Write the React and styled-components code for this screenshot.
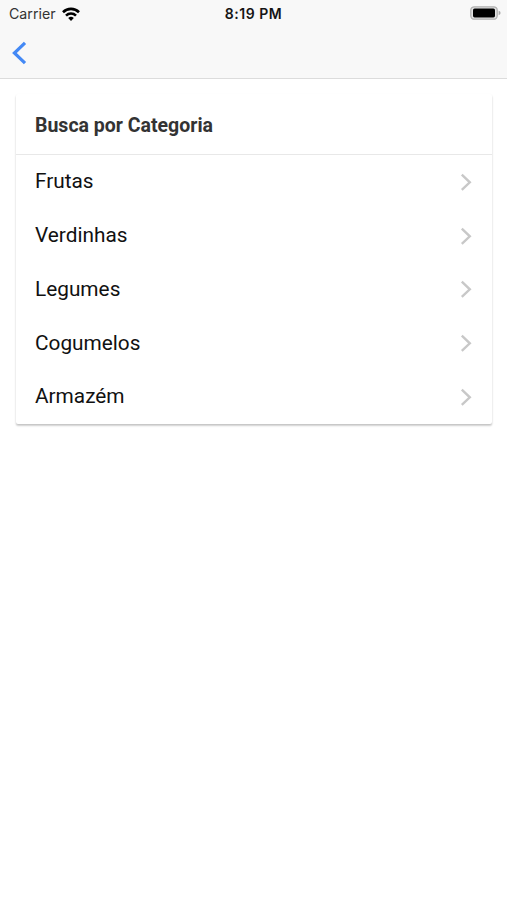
import React from "react";
import styled, { createGlobalStyle } from "styled-components";

const GlobalStyle = createGlobalStyle`
  * {
    box-sizing: border-box;
  }

  body {
    margin: 0;
    background: #fff;
    font-family: Roboto, sans-serif;
  }
`;

const Page = styled.div`
  min-height: 900px;
  background: #fff;
`;

const Header = styled.header`
  height: 79px;
  background: #f8f8f8;
  border-bottom: 1px solid #dcdcdc;
`;

const StatusBar = styled.div`
  display: grid;
  grid-template-columns: 1fr auto 1fr;
  align-items: center;
  height: 27px;
  padding: 0 6px 0 9px;
  font-family: Inter, sans-serif;
  font-size: 14.2px;
  line-height: 26px;
  color: #333;
`;

const Carrier = styled.div`
  display: flex;
  align-items: center;
  gap: 6px;
  height: 26px;
`;

const Time = styled.div`
  height: 26px;
  margin-right: 3px;
  font-size: 14px;
  font-weight: 600;
  letter-spacing: 0.5px;
  color: #151515;
`;

const Battery = styled.div`
  display: flex;
  justify-content: flex-end;
  padding-bottom: 1px;
`;

const Toolbar = styled.nav`
  display: flex;
  align-items: center;
  height: 51px;
  padding-left: 11px;
`;

const BackButton = styled.button`
  display: flex;
  padding: 0;
  border: 0;
  background: none;
`;

const Card = styled.section`
  height: 330px;
  margin: 15px 15px 0 16px;
  border-radius: 2px;
  background: #fff;
  box-shadow: 0 2px 2px rgba(0, 0, 0, 0.16), 0 1px 2px rgba(0, 0, 0, 0.1);
`;

const CardHeader = styled.h2`
  height: 61px;
  margin: 0;
  padding-left: 19px;
  border-bottom: 1px solid #e8e8e8;
  font-size: 19.5px;
  font-weight: 700;
  line-height: 63px;
  color: #333;
`;

const Item = styled.div`
  display: flex;
  align-items: center;
  justify-content: space-between;
  height: 53.75px;
  padding: 0 20px 0 19px;
  font-size: 20.8px;
  color: #111;
`;

const Label = styled.span`
  padding-bottom: 1px;
`;

const categories = ["Frutas", "Verdinhas", "Legumes", "Cogumelos", "Armazém"];

const App = () => {
  return (
    <Page>
      <GlobalStyle />
      <Header>
        <StatusBar>
          <Carrier>
            Carrier
            <svg width="18" height="14" viewBox="0 0 18 14" fill="none" stroke="#000" strokeWidth="2.6">
              <path d="M1 5.2a11.4 11.4 0 0 1 16 0" />
              <path d="M4 8.6a7.1 7.1 0 0 1 10 0" />
              <path d="M9 14 6.2 11.1a4 4 0 0 1 5.6 0Z" fill="#000" stroke="none" />
            </svg>
          </Carrier>
          <Time>8:19 PM</Time>
          <Battery>
            <svg width="31" height="14" viewBox="0 0 31 14">
              <rect x="0.8" y="0.8" width="26.4" height="12.4" rx="3.5" fill="#e2e2e2" stroke="#b0b0b0" strokeWidth="1.3" />
              <rect x="3" y="2.6" width="22" height="8.8" rx="1.6" fill="#000" />
              <path d="M28.6 4.8q2 .6 2 2.2t-2 2.2Z" fill="#aaa" />
            </svg>
          </Battery>
        </StatusBar>
        <Toolbar>
          <BackButton aria-label="Voltar">
            <svg width="16" height="24" viewBox="0 0 16 24" fill="none" stroke="#4489f5" strokeWidth="3.2">
              <path d="M14 1.8 3.4 12 14 22.2" />
            </svg>
          </BackButton>
        </Toolbar>
      </Header>
      <Card>
        <CardHeader>Busca por Categoria</CardHeader>
        {categories.map((name) => (
          <Item key={name}>
            <Label>{name}</Label>
            <svg width="12" height="18" viewBox="0 0 12 18" fill="none" stroke="#c8c8c8" strokeWidth="2.4">
              <path d="m1.8 1.7 8 7.6-8 7.6" />
            </svg>
          </Item>
        ))}
      </Card>
    </Page>
  );
};

export default App;
